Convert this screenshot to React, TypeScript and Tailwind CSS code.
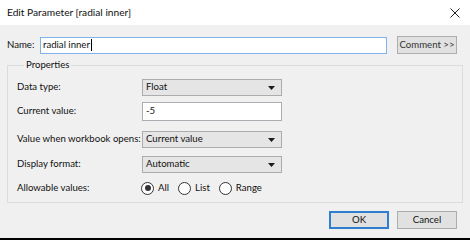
import { useState } from "react";

const font = { fontFamily: 'Lato, "Noto Sans", sans-serif' };

const Dropdown = ({ value }: { value: string }) => (
  <div className="flex h-[17px] w-[140px] items-center justify-between border border-[#acacac] bg-[#e5e5e5] pl-[3px] pr-[6px]">
    <span>{value}</span>
    <svg width="7" height="4" viewBox="0 0 7 4">
      <path d="M0 0h7L3.5 4z" fill="#1a1a1a" />
    </svg>
  </div>
);

const Radio = ({ label, checked }: { label: string; checked?: boolean }) => (
  <label className="flex items-center gap-[4px]">
    <span className="flex h-[13px] w-[13px] items-center justify-center rounded-full border border-[#333] bg-white">
      {checked && <span className="h-[6px] w-[6px] rounded-full bg-[#333]" />}
    </span>
    <span>{label}</span>
  </label>
);

export default function App() {
  const [allowed] = useState("All");

  return (
    <div className="flex h-[240px] w-[470px] flex-col whitespace-nowrap bg-black text-[9.6px] text-[#111]" style={font}>
      <div className="flex h-[238px] flex-col bg-[#f0f0f0]">
        {/* Title bar */}
        <div className="flex h-[25px] shrink-0 items-center justify-between bg-white pl-[7px] pr-[10px]">
          <span className="text-[10.2px]">Edit Parameter [radial inner]</span>
          <svg width="10" height="10" viewBox="0 0 10 10">
            <path d="M0.5 0.5l9 9M9.5 0.5l-9 9" stroke="#222" strokeWidth="1" />
          </svg>
        </div>

        {/* Name row */}
        <div className="mt-[11px] flex items-center pl-[7px]">
          <span className="w-[33px]">Name:</span>
          <div className="flex h-[17px] w-[347px] items-center border border-[#7eb4ea] bg-white pl-[2px]">
            radial inner<span className="ml-[1px] h-[12px] w-[1px] bg-black" />
          </div>
          <button className="ml-[10px] h-[18px] w-[60px] border border-[#adadad] bg-[#e1e1e1] text-[#333]">
            Comment &gt;&gt;
          </button>
        </div>

        {/* Properties group */}
        <fieldset className="mx-[7px] mt-[3px] h-[146px] border border-[#dcdcdc] pl-[9px]">
          <legend className="ml-[7px] px-[2px] leading-[16px]">Properties</legend>
          <div className="mt-[6px] flex items-center">
            <span className="w-[125px]">Data type:</span>
            <Dropdown value="Float" />
          </div>
          <div className="mt-[6px] flex items-center">
            <span className="w-[125px]">Current value:</span>
            <div className="flex h-[19px] w-[140px] items-center border border-[#abadb3] bg-white pl-[3px]">-5</div>
          </div>
          <div className="mt-[10px] flex items-center">
            <span className="w-[125px]">Value when workbook opens:</span>
            <Dropdown value="Current value" />
          </div>
          <div className="mt-[8px] flex items-center">
            <span className="w-[125px]">Display format:</span>
            <Dropdown value="Automatic" />
          </div>
          <div className="mt-[8px] flex items-center">
            <span className="w-[124px]">Allowable values:</span>
            <div className="flex items-center gap-[9px]">
              <Radio label="All" checked={allowed === "All"} />
              <Radio label="List" checked={allowed === "List"} />
              <Radio label="Range" checked={allowed === "Range"} />
            </div>
          </div>
        </fieldset>

        {/* Buttons */}
        <div className="mt-[8px] flex justify-end gap-[8px] pr-[13px]">
          <button className="h-[18px] w-[60px] border-2 border-[#2f7fd0] bg-[#e1e1e1]">OK</button>
          <button className="h-[18px] w-[60px] border border-[#adadad] bg-[#e1e1e1]">Cancel</button>
        </div>
      </div>
    </div>
  );
}
